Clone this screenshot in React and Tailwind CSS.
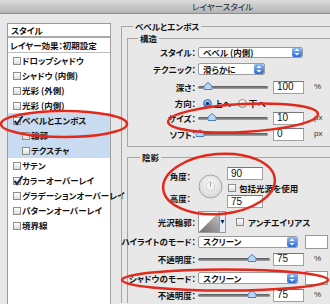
import React from 'react';

const JP = "font-['Noto_Sans_CJK_JP',sans-serif] [font-feature-settings:'palt']";

const effects = [
  { label: 'ドロップシャドウ' },
  { label: 'シャドウ (内側)' },
  { label: '光彩 (外側)' },
  { label: '光彩 (内側)' },
  { label: 'ベベルとエンボス', checked: true, selected: true },
  { label: '輪郭', sub: true, selected: true },
  { label: 'テクスチャ', sub: true, selected: true },
  { label: 'サテン' },
  { label: 'カラーオーバーレイ', checked: true },
  { label: 'グラデーションオーバーレイ' },
  { label: 'パターンオーバーレイ' },
  { label: '境界線' },
];

function CheckBox({ checked }) {
  return (
    <span className="relative w-[8px] h-[8px] shrink-0 border border-[#8d8d8d] bg-linear-to-b from-white to-[#dcdcdc]">
      {checked && (
        <svg className="absolute left-[-1px] top-[-3px]" width="11" height="11" viewBox="0 0 11 11">
          <path d="M1.5 6 L4 9 L9.5 1" fill="none" stroke="#1b2a52" strokeWidth="2" />
        </svg>
      )}
    </span>
  );
}

function Stepper() {
  return (
    <span className="ml-auto w-[10px] h-full rounded-[2px] bg-linear-to-b from-[#8cbaf5] to-[#2c6ad6] flex items-center justify-center">
      <svg width="6" height="8" viewBox="0 0 6 8">
        <path d="M3 0.5 L5.5 3 H0.5Z M3 7.5 L5.5 5 H0.5Z" fill="#fff" />
      </svg>
    </span>
  );
}

function Select({ label, className }) {
  return (
    <div className={`flex items-center bg-white border border-[#9c9c9c] rounded-[2px] ${className}`}>
      <span className={`pl-[4px] text-[8.5px] leading-none font-bold text-[#111] ${JP}`}>{label}</span>
      <Stepper />
    </div>
  );
}

function NumBox({ value, className }) {
  return (
    <div className={`h-[13px] bg-white border border-[#a0a0a0] border-t-[#777] pl-[3px] flex items-center text-[10px] leading-none text-[#111] font-['Liberation_Sans',sans-serif] ${className}`}>
      {value}
    </div>
  );
}

function Slider({ pct, className }) {
  return (
    <div className={`relative h-[10px] flex items-center ${className}`}>
      <div className="w-full h-[3px] rounded-full bg-linear-to-b from-[#555] to-[#a8a8a8]" />
      <svg className="absolute top-[0px] -translate-x-1/2" style={{ left: `${pct}%` }} width="9" height="8" viewBox="0 0 9 8">
        <path d="M4.5 0.5 L8.5 4 V7.5 H0.5 V4 Z" fill="#b9d4f5" stroke="#4a7fc4" />
      </svg>
    </div>
  );
}

function Radio({ on }) {
  return (
    <span className={`w-[9px] h-[9px] rounded-full border flex items-center justify-center ${on ? 'border-[#3b6db3] bg-linear-to-b from-[#a6cbf7] to-[#3d7bd8]' : 'border-[#8a8a8a] bg-linear-to-b from-white to-[#dadada]'}`}>
      {on && <span className="w-[3px] h-[3px] rounded-full bg-[#10224a]" />}
    </span>
  );
}

function Label({ children, className = '' }) {
  return (
    <div className={`w-[68px] shrink-0 flex justify-end whitespace-nowrap text-[8.5px] leading-none font-bold text-[#111] ${JP} ${className}`}>
      {children}
    </div>
  );
}

function Unit({ children }) {
  return <span className="ml-[8px] text-[8px] leading-none text-[#333] font-['Liberation_Sans',sans-serif]">{children}</span>;
}

function Text({ children, className = '' }) {
  return <span className={`text-[8.5px] leading-none font-bold text-[#111] whitespace-nowrap ${JP} ${className}`}>{children}</span>;
}

export default function App() {
  return (
    <div className="relative w-[330px] h-[304px] overflow-hidden bg-[#e8e8e8]">
      <div className={`h-[14px] bg-linear-to-b from-[#dcdcdc] to-[#b4b4b4] border-b border-[#8e8e8e] pl-[192px] flex items-center text-[8.5px] leading-none text-[#222] ${JP}`}>
        レイヤースタイル
      </div>

      <div className="flex items-start">
        <div className="mt-[9px] ml-[7px] w-[104px] h-[290px] shrink-0 bg-white border border-[#9c9c9c]">
          <div className="h-[14px] flex items-center pl-[3px] border-b-2 border-[#a9a9a9]">
            <Text>スタイル</Text>
          </div>
          <div className="h-[15px] flex items-center pl-[2px] border-b border-[#bdbdbd]">
            <Text>レイヤー効果：初期設定</Text>
          </div>
          {effects.map((e) => (
            <div
              key={e.label}
              className={`h-[15px] flex items-center gap-[1px] ${e.sub ? 'pl-[14px]' : 'pl-[5px]'} ${e.selected ? 'bg-[#c9dbf1]' : ''}`}
            >
              <CheckBox checked={e.checked} />
              <Text>{e.label}</Text>
            </div>
          ))}
        </div>

        <fieldset className="mt-[7px] ml-[10px] w-[224px] shrink-0 border-l border-t border-[#a5a5a5] pl-[5px] pt-[2px]">
          <legend className={`ml-[6px] px-[2px] text-[8.5px] leading-[10px] font-bold text-[#111] ${JP}`}>ベベルとエンボス</legend>

          <fieldset className="w-[214px] border border-[#a5a5a5] pt-[1px] pb-[4px]">
            <legend className={`ml-[10px] px-[2px] text-[8.5px] leading-[10px] font-bold text-[#111] ${JP}`}>構造</legend>
            <div className="h-[16px] flex items-center gap-[2px]">
              <Label>スタイル：</Label>
              <Select label="ベベル (内側)" className="w-[105px] h-[11px]" />
            </div>
            <div className="h-[18px] flex items-center gap-[2px]">
              <Label>テクニック：</Label>
              <Select label="滑らかに" className="w-[67px] h-[12px]" />
            </div>
            <div className="h-[18px] flex items-center gap-[2px]">
              <Label>深さ：</Label>
              <Slider pct={14} className="w-[70px]" />
              <NumBox value="100" className="ml-[3px] w-[31px]" />
              <Unit>%</Unit>
            </div>
            <div className="h-[14px] flex items-center gap-[2px]">
              <Label>方向：</Label>
              <div className="ml-[5px] flex items-center gap-[2px]">
                <Radio on />
                <Text>上へ</Text>
              </div>
              <div className="ml-[5px] flex items-center gap-[2px]">
                <Radio />
                <Text>下へ</Text>
              </div>
            </div>
            <div className="h-[16px] flex items-center gap-[2px]">
              <Label>サイズ：</Label>
              <Slider pct={20} className="w-[70px]" />
              <NumBox value="10" className="ml-[3px] w-[31px]" />
              <Unit>px</Unit>
            </div>
            <div className="h-[16px] flex items-center gap-[2px]">
              <Label>ソフト：</Label>
              <Slider pct={3} className="w-[70px]" />
              <NumBox value="0" className="ml-[3px] w-[31px]" />
              <Unit>px</Unit>
            </div>
          </fieldset>

          <fieldset className="mt-[5px] w-[214px] border-l border-t border-[#a5a5a5]">
            <legend className={`ml-[12px] px-[2px] text-[8.5px] leading-[10px] font-bold text-[#111] ${JP}`}>陰影</legend>

            <div className="mt-[5px] h-[40px] flex items-start gap-[2px]">
              <div className="h-full flex flex-col justify-between py-[5px]">
                <Label className="pr-[5px]">角度：</Label>
                <Label className="pr-[5px]">高度：</Label>
              </div>
              <svg className="mt-[7px]" width="25" height="25" viewBox="0 0 25 25">
                <defs>
                  <radialGradient id="dial" cx="50%" cy="40%" r="60%">
                    <stop offset="0" stopColor="#fdfdfd" />
                    <stop offset="1" stopColor="#d6d6d6" />
                  </radialGradient>
                </defs>
                <circle cx="12.5" cy="12.5" r="11.5" fill="url(#dial)" stroke="#a5a5a5" />
                <circle cx="12.5" cy="12.5" r="4.5" fill="none" stroke="#cfcfcf" />
                <line x1="12.5" y1="12.5" x2="12.5" y2="8" stroke="#a0a0a0" />
              </svg>
              <div className="ml-[2px] flex flex-col">
                <NumBox value="90" className="w-[36px] h-[12px]" />
                <div className="mt-[4px] ml-[1px] h-[8px] flex items-center gap-[3px]">
                  <CheckBox />
                  <Text>包括光源を使用</Text>
                </div>
                <NumBox value="75" className="mt-[3px] w-[36px] h-[12px]" />
              </div>
            </div>

            <div className="mt-[4px] h-[22px] flex items-center gap-[2px]">
              <Label>光沢輪郭：</Label>
              <svg width="29" height="22" viewBox="0 0 29 22">
                <defs>
                  <linearGradient id="ct" x1="0" y1="1" x2="1" y2="0">
                    <stop offset="0" stopColor="#6c6c6c" />
                    <stop offset="1" stopColor="#c4c4c4" />
                  </linearGradient>
                </defs>
                <rect x="0.5" y="0.5" width="21" height="21" fill="#fff" stroke="#9a9a9a" />
                <path d="M1 21 L21 1 V21 Z" fill="url(#ct)" />
                <rect x="21.5" y="0.5" width="6" height="21" fill="#e6edf8" stroke="#9a9a9a" />
                <path d="M22.5 9 H26.5 L24.5 13 Z" fill="#13255a" />
              </svg>
              <div className="ml-[7px] flex items-center gap-[4px]">
                <CheckBox />
                <Text>アンチエイリアス</Text>
              </div>
            </div>

            <div className="mt-[1px] h-[15px] flex items-center gap-[2px]">
              <Label>ハイライトのモード：</Label>
              <Select label="スクリーン" className="w-[100px] h-[12px]" />
              <div className="ml-[5px] w-[23px] h-[14px] bg-white border border-[#9a9a9a]" />
            </div>
            <div className="mt-[1px] h-[18px] flex items-center gap-[2px]">
              <Label>不透明度：</Label>
              <Slider pct={75} className="w-[72px]" />
              <NumBox value="75" className="ml-[1px] w-[31px]" />
              <Unit>%</Unit>
            </div>
            <div className="mt-[1px] h-[18px] flex items-center gap-[2px]">
              <Label>シャドウのモード：</Label>
              <Select label="スクリーン" className="w-[100px] h-[12px]" />
              <div className="ml-[5px] w-[23px] h-[14px] bg-white border border-[#9a9a9a]" />
            </div>
            <div className="h-[16px] flex items-center gap-[2px]">
              <Label>不透明度：</Label>
              <Slider pct={75} className="w-[72px]" />
              <NumBox value="75" className="ml-[1px] w-[31px]" />
              <Unit>%</Unit>
            </div>
          </fieldset>
        </fieldset>
      </div>

      <svg className="absolute inset-0 pointer-events-none" width="330" height="304" viewBox="0 0 330 304">
        <g fill="none" stroke="#e3281c" strokeWidth="2.5">
          <ellipse cx="64" cy="124" rx="63" ry="13" />
          <ellipse cx="243" cy="118" rx="75" ry="14" transform="rotate(-3 243 118)" />
          <ellipse cx="219" cy="184" rx="56" ry="30" transform="rotate(-5 219 184)" />
          <ellipse cx="225" cy="280" rx="103" ry="10.5" />
        </g>
      </svg>
    </div>
  );
}
